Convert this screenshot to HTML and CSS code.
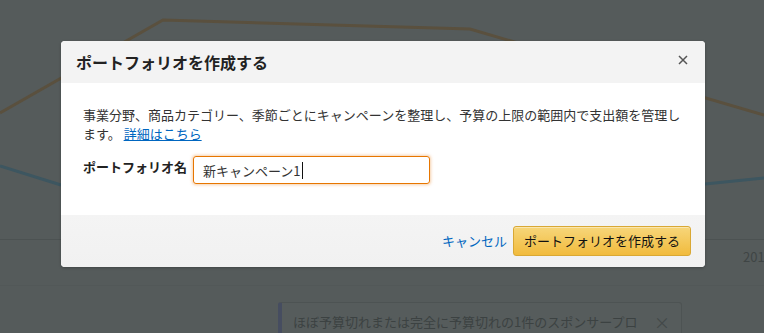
FILE: index.html
```html
<!DOCTYPE html>
<html lang="ja">
<head>
<meta charset="utf-8">
<title>ポートフォリオを作成する</title>
<link rel="stylesheet" href="styles.css">
</head>
<body>
<div class="page">
  <svg class="chart" width="764" height="333" viewBox="0 0 764 333">
    <line x1="0" y1="239.5" x2="764" y2="239.5" stroke="#4c5252" stroke-width="1"/>
    <line x1="0" y1="285.5" x2="764" y2="285.5" stroke="#525858" stroke-width="1"/>
    <polyline points="0,113 163,20 470,29 764,115" fill="none" stroke="#5a503e" stroke-width="3"/>
    <polyline points="0,166 61,185" fill="none" stroke="#3d5660" stroke-width="3"/>
    <polyline points="705,184 764,178" fill="none" stroke="#3d5660" stroke-width="3"/>
  </svg>
  <div class="axis-label">201</div>
  <div class="notice">
    <span class="notice-text">ほぼ予算切れまたは完全に予算切れの1件のスポンサープロ</span>
    <span class="notice-close">×</span>
  </div>
</div>

<div class="modal">
  <div class="modal-header">
    <h2 class="modal-title">ポートフォリオを作成する</h2>
    <span class="modal-close">
      <svg width="10" height="10" viewBox="0 0 10 10"><path d="M1 1 L9 9 M9 1 L1 9" stroke="#555" stroke-width="1.5" fill="none"/></svg>
    </span>
  </div>
  <div class="modal-body">
    <p class="desc">事業分野、商品カテゴリー、季節ごとにキャンペーンを整理し、予算の上限の範囲内で支出額を管理します。 <a class="link" href="#">詳細はこちら</a></p>
    <div class="form-row">
      <label class="form-label">ポートフォリオ名</label>
      <div class="input"><span class="input-text">新キャンペーン1</span><span class="caret"></span></div>
    </div>
  </div>
  <div class="modal-footer">
    <a class="cancel" href="#">キャンセル</a>
    <button class="primary">ポートフォリオを作成する</button>
  </div>
</div>
</body>
</html>
```

FILE: styles.css
```css
* { box-sizing: border-box; }
html, body {
  margin: 0;
  padding: 0;
  width: 764px;
  height: 333px;
  overflow: hidden;
  background: #555b5b;
  font-family: "Noto Sans CJK JP", "Noto Sans", "Liberation Sans", sans-serif;
}
.page {
  position: relative;
  width: 764px;
  height: 333px;
  overflow: hidden;
}
.chart {
  position: absolute;
  left: 0;
  top: 0;
}
.axis-label {
  position: absolute;
  left: 743px;
  top: 248px;
  font-size: 13px;
  line-height: 18px;
  color: #3f4545;
}
.notice {
  position: absolute;
  left: 278px;
  top: 302px;
  width: 404px;
  height: 40px;
  border: 1px solid #4d5353;
  border-left: 4px solid #464d60;
  border-radius: 3px;
  background: #565c5c;
  display: flex;
  align-items: flex-start;
  padding: 10px 0 0 11px;
  font-size: 13px;
  line-height: 18px;
  color: #3c4242;
}
.notice-text { flex: 1; white-space: nowrap; }
.notice-close {
  width: 27px;
  font-size: 16px;
  color: #434949;
}
.modal {
  position: absolute;
  left: 61px;
  top: 41px;
  width: 644px;
  border-radius: 4px;
  overflow: hidden;
  background: #fff;
  box-shadow: 0 1px 3px rgba(0,0,0,0.25);
}
.modal-header {
  height: 42px;
  background: #f3f3f3;
  display: flex;
  align-items: center;
  justify-content: space-between;
  padding: 0 17px 0 15px;
}
.modal-title {
  margin: 0;
  font-size: 16px;
  font-weight: 700;
  color: #222;
  line-height: 22px;
}
.modal-close {
  display: flex;
  width: 10px;
  height: 10px;
  margin-top: -4px;
}
.modal-body {
  padding: 22px 22px 31px 22px;
}
.desc {
  margin: 0;
  font-size: 13px;
  line-height: 19px;
  color: #333;
}
.link {
  color: #0066c0;
  text-decoration: underline;
}
.form-row {
  margin-top: 13px;
  display: flex;
  align-items: flex-start;
  gap: 6px;
}
.form-label {
  font-size: 13px;
  font-weight: 700;
  color: #222;
  line-height: 20px;
  padding-top: 1px;
}
.input {
  width: 237px;
  height: 28px;
  border: 1px solid #e77600;
  border-radius: 3px;
  box-shadow: 0 0 3px 1px rgba(228,121,17,0.35);
  display: flex;
  align-items: center;
  padding-left: 9px;
  font-size: 13px;
  color: #333;
}
.caret {
  display: inline-block;
  width: 1px;
  height: 17px;
  background: #111;
  margin-left: 1px;
}
.modal-footer {
  height: 52px;
  background: linear-gradient(#f4f4f4, #f1f1f1);
  display: flex;
  align-items: center;
  justify-content: flex-end;
  padding: 0 14px 0 0;
  gap: 6px;
}
.cancel {
  color: #0066c0;
  text-decoration: none;
  font-size: 13px;
  line-height: 18px;
}
.primary {
  height: 30px;
  padding: 0 10px;
  border: 1px solid #d9a834;
  border-radius: 3px;
  background: linear-gradient(#f7d67a, #f1bb3d);
  font-family: inherit;
  font-size: 13px;
  color: #111;
  line-height: 28px;
  box-shadow: 0 1px 0 rgba(255,255,255,0.4) inset;
}
```
